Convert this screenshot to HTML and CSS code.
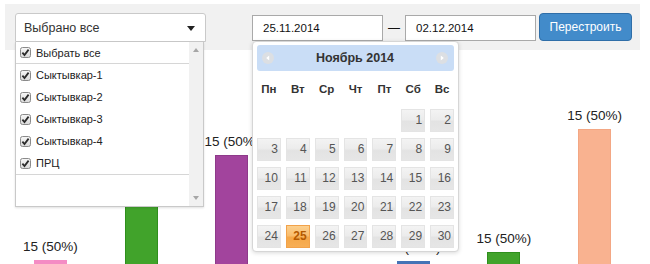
FILE: index.html
```html
<!DOCTYPE html>
<html lang="ru">
<head>
<meta charset="utf-8">
<title>Отчёт</title>
<link rel="stylesheet" href="styles.css">
</head>
<body>
<div class="toolbar">
  <div class="select-wrap">
    <div class="select"><span>Выбрано все</span><span class="caret"></span></div>
    <div class="list">
      <div class="items">
        <div class="item first"><span class="cb"><svg viewBox="0 0 11 11" width="11" height="11"><defs><linearGradient id="g" x1="0" y1="0" x2="0" y2="1"><stop offset="0" stop-color="#f7f7f7"/><stop offset="1" stop-color="#d9d9d9"/></linearGradient></defs><rect x="0.5" y="0.5" width="10" height="10" rx="2" fill="url(#g)" stroke="#8a8a8a"/><path d="M2.4 5.6 L4.5 8 L8.6 2.6" fill="none" stroke="#2b2b2b" stroke-width="1.8"/></svg></span>Выбрать все</div>
        <div class="item"><span class="cb"><svg viewBox="0 0 11 11" width="11" height="11"><rect x="0.5" y="0.5" width="10" height="10" rx="2" fill="url(#g)" stroke="#8a8a8a"/><path d="M2.4 5.6 L4.5 8 L8.6 2.6" fill="none" stroke="#2b2b2b" stroke-width="1.8"/></svg></span>Сыктывкар-1</div>
        <div class="item"><span class="cb"><svg viewBox="0 0 11 11" width="11" height="11"><rect x="0.5" y="0.5" width="10" height="10" rx="2" fill="url(#g)" stroke="#8a8a8a"/><path d="M2.4 5.6 L4.5 8 L8.6 2.6" fill="none" stroke="#2b2b2b" stroke-width="1.8"/></svg></span>Сыктывкар-2</div>
        <div class="item"><span class="cb"><svg viewBox="0 0 11 11" width="11" height="11"><rect x="0.5" y="0.5" width="10" height="10" rx="2" fill="url(#g)" stroke="#8a8a8a"/><path d="M2.4 5.6 L4.5 8 L8.6 2.6" fill="none" stroke="#2b2b2b" stroke-width="1.8"/></svg></span>Сыктывкар-3</div>
        <div class="item"><span class="cb"><svg viewBox="0 0 11 11" width="11" height="11"><rect x="0.5" y="0.5" width="10" height="10" rx="2" fill="url(#g)" stroke="#8a8a8a"/><path d="M2.4 5.6 L4.5 8 L8.6 2.6" fill="none" stroke="#2b2b2b" stroke-width="1.8"/></svg></span>Сыктывкар-4</div>
        <div class="item last"><span class="cb"><svg viewBox="0 0 11 11" width="11" height="11"><rect x="0.5" y="0.5" width="10" height="10" rx="2" fill="url(#g)" stroke="#8a8a8a"/><path d="M2.4 5.6 L4.5 8 L8.6 2.6" fill="none" stroke="#2b2b2b" stroke-width="1.8"/></svg></span>ПРЦ</div>
      </div>
      <div class="scrollbar">
        <span class="arrow up"></span>
        <span class="arrow down"></span>
      </div>
    </div>
  </div>

  <div class="date-wrap">
    <div class="date">25.11.2014</div>
    <div class="calendar">
      <div class="cal-head">
        <svg class="nav" viewBox="0 0 12 12" width="12" height="12"><circle cx="6" cy="6" r="6" fill="#dcdfe3"/><path d="M7.2 3.4 L4.2 6 L7.2 8.6 Z" fill="#fff"/></svg>
        <span class="cal-title">Ноябрь 2014</span>
        <svg class="nav" viewBox="0 0 12 12" width="12" height="12"><circle cx="6" cy="6" r="6" fill="#dcdfe3"/><path d="M4.8 3.4 L7.8 6 L4.8 8.6 Z" fill="#fff"/></svg>
      </div>
      <div class="weekdays">
        <span>Пн</span><span>Вт</span><span>Ср</span><span>Чт</span><span>Пт</span><span>Сб</span><span>Вс</span>
      </div>
      <div class="days">
        <span class="empty"></span><span class="empty"></span><span class="empty"></span><span class="empty"></span><span class="empty"></span>
        <span class="day">1</span><span class="day">2</span>
        <span class="day">3</span><span class="day">4</span><span class="day">5</span><span class="day">6</span><span class="day">7</span><span class="day">8</span><span class="day">9</span>
        <span class="day">10</span><span class="day">11</span><span class="day">12</span><span class="day">13</span><span class="day">14</span><span class="day">15</span><span class="day">16</span>
        <span class="day">17</span><span class="day">18</span><span class="day">19</span><span class="day">20</span><span class="day">21</span><span class="day">22</span><span class="day">23</span>
        <span class="day">24</span><span class="day today">25</span><span class="day">26</span><span class="day">27</span><span class="day">28</span><span class="day">29</span><span class="day">30</span>
      </div>
    </div>
  </div>
  <span class="dash">—</span>
  <div class="date">02.12.2014</div>
  <button class="btn">Перестроить</button>
</div>

<div class="chart">
  <div class="col"><span class="label">15 (50%)</span><span class="bar pink" style="height:4px"></span></div>
  <div class="col"><span class="label">15 (50%)</span><span class="bar green" style="height:74px"></span></div>
  <div class="col"><span class="label">15 (50%)</span><span class="bar purple" style="height:109px"></span></div>
  <div class="col"></div>
  <div class="col"><span class="label">15 (50%)</span><span class="bar blue" style="height:3px"></span></div>
  <div class="col"><span class="label">15 (50%)</span><span class="bar green" style="height:12px"></span></div>
  <div class="col"><span class="label">15 (50%)</span><span class="bar salmon" style="height:135px"></span></div>
</div>
</body>
</html>
```

FILE: styles.css
```css
html, body {
  margin: 0;
  padding: 0;
  background: #fff;
  overflow: hidden;
}
body {
  font-family: "Liberation Sans", Arial, sans-serif;
  color: #222;
  width: 650px;
  height: 264px;
}

.toolbar {
  margin: 4px 10px 0 5px;
  height: 46px;
  box-sizing: border-box;
  padding: 9px 0 0 10px;
  background: #f1f1f1;
  display: flex;
  align-items: flex-start;
  position: relative;
  z-index: 2;
}

.select-wrap {
  position: relative;
  width: 191px;
}
.select {
  height: 29px;
  box-sizing: border-box;
  border: 1px solid #c9c9c9;
  border-radius: 3px 3px 0 0;
  background: #fff;
  display: flex;
  align-items: center;
  justify-content: space-between;
  padding: 0 10px 0 8px;
  font-size: 12.5px;
  color: #333;
}
.caret {
  width: 0;
  height: 0;
  border-left: 4px solid transparent;
  border-right: 4px solid transparent;
  border-top: 5px solid #222;
  margin-top: 2px;
}
.list {
  position: absolute;
  left: 0;
  top: 29px;
  width: 189px;
  height: 165px;
  box-sizing: border-box;
  border: 1px solid #c9c9c9;
  border-top: none;
  background: #fff;
  display: flex;
  box-shadow: 0 1px 2px rgba(0,0,0,0.12);
}
.items {
  flex: 1;
}
.item {
  height: 22px;
  display: flex;
  align-items: center;
  padding-left: 4px;
  font-size: 11px;
  color: #222;
}
.item.first {
  height: 21px;
  border-bottom: 1px solid #d6d6d6;
}
.item.last {
  border-bottom: 1px solid #d6d6d6;
}
.cb {
  width: 11px;
  height: 11px;
  margin-right: 5px;
  display: flex;
}
.scrollbar {
  width: 14px;
  background: #f1f1f1;
  display: flex;
  flex-direction: column;
  justify-content: space-between;
  align-items: center;
  padding: 6px 0 6px;
}
.arrow {
  width: 0;
  height: 0;
  border-left: 3.5px solid transparent;
  border-right: 3.5px solid transparent;
}
.arrow.up { border-bottom: 4px solid #a6a6a6; }
.arrow.down { border-top: 4px solid #a6a6a6; }

.date-wrap {
  position: relative;
  margin-left: 46px;
  margin-top: 2px;
}
.date {
  width: 131px;
  height: 26px;
  box-sizing: border-box;
  border: 1px solid #a9a9a9;
  background: #fff;
  padding-left: 10px;
  font-size: 11.5px;
  line-height: 24px;
  color: #111;
  margin-top: 2px;
}
.date-wrap .date { margin-top: 0; }
.dash {
  width: 22px;
  text-align: center;
  font-size: 12px;
  line-height: 26px;
  margin-top: 2px;
  color: #111;
}
.btn {
  margin-left: 3px;
  width: 93px;
  height: 28px;
  box-sizing: border-box;
  border: 1px solid #2f6ea8;
  border-radius: 4px;
  background: #428bca;
  color: #fff;
  font-family: "Liberation Sans", Arial, sans-serif;
  font-size: 12px;
  padding: 0;
}

.calendar {
  position: absolute;
  left: 0;
  top: 26px;
  width: 207px;
  box-sizing: border-box;
  border: 1px solid #d6d6d6;
  border-radius: 4px;
  background: #fff;
  padding: 3px 4px 3px;
  box-shadow: 0 1px 4px rgba(0,0,0,0.15);
}
.cal-head {
  height: 26px;
  background: #c9ddf6;
  border-radius: 3px;
  display: flex;
  align-items: center;
  justify-content: space-between;
  padding: 0 6px 0 5px;
}
.cal-title {
  font-weight: bold;
  font-size: 12.5px;
  color: #333;
}
.nav { display: block; }
.weekdays {
  display: grid;
  grid-template-columns: repeat(7, 1fr);
  column-gap: 5px;
  padding: 10px 0 12px;
  line-height: 16px;
  font-size: 11.5px;
  font-weight: bold;
  color: #333;
  text-align: center;
}
.days {
  display: grid;
  grid-template-columns: repeat(7, 1fr);
  grid-auto-rows: 23px;
  column-gap: 5px;
  row-gap: 6px;
}
.day {
  box-sizing: border-box;
  border: 1px solid #e4e4e4;
  background: linear-gradient(to bottom, #f3f3f3 0%, #ececec 45%, #e3e3e3 55%, #e6e6e6 100%);
  text-align: right;
  padding-right: 2px;
  font-size: 12px;
  line-height: 21px;
  color: #555;
}
.day.today {
  border-color: #f2a24a;
  background: linear-gradient(to bottom, #fcd08e 0%, #f9bd6d 45%, #f5a748 55%, #f7ae55 100%);
  color: #b55a00;
  font-weight: bold;
}

.chart {
  margin-left: 5px;
  width: 635px;
  height: 214px;
  display: grid;
  grid-template-columns: repeat(7, 1fr);
  align-items: end;
}
.col {
  display: flex;
  flex-direction: column;
  align-items: center;
}
.label {
  font-size: 13.5px;
  line-height: 16px;
  color: #222;
  margin-bottom: 5px;
  white-space: nowrap;
}
.bar {
  display: block;
  width: 33px;
  box-sizing: border-box;
}
.pink { background: #f48cc4; }
.green { background: #41a32b; border: 1px solid #2f8f1d; border-bottom: none; }
.purple { background: #a2449d; border: 1px solid #8e3a8a; border-bottom: none; }
.blue { background: #4473b6; }
.salmon { background: #f9b290; border: 1px solid #f3a784; border-bottom: none; }
```
